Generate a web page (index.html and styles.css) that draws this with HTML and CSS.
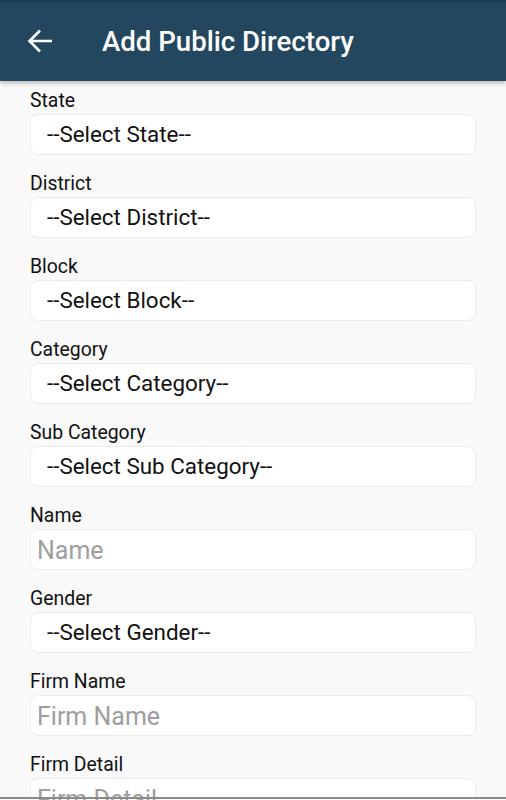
FILE: index.html
```html
<!DOCTYPE html>
<html>
<head>
<meta charset="utf-8">
<link rel="stylesheet" href="styles.css">
</head>
<body>
<div class="app">
  <header class="toolbar">
    <svg class="back" viewBox="0 0 26 26" width="26" height="26"><path d="M25 13H2.5M13 2.5L2.5 13 13 23.5" fill="none" stroke="#fff" stroke-width="2.6" stroke-linecap="butt" stroke-linejoin="miter"/></svg>
    <h1 class="title">Add Public Directory</h1>
  </header>
  <main class="form">
    <div class="field"><div class="label">State</div><div class="box select">--Select State--</div></div>
    <div class="field"><div class="label">District</div><div class="box select">--Select District--</div></div>
    <div class="field"><div class="label">Block</div><div class="box select">--Select Block--</div></div>
    <div class="field"><div class="label">Category</div><div class="box select">--Select Category--</div></div>
    <div class="field"><div class="label">Sub Category</div><div class="box select">--Select Sub Category--</div></div>
    <div class="field"><div class="label">Name</div><div class="box input">Name</div></div>
    <div class="field"><div class="label">Gender</div><div class="box select">--Select Gender--</div></div>
    <div class="field"><div class="label">Firm Name</div><div class="box input">Firm Name</div></div>
    <div class="field"><div class="label">Firm Detail</div><div class="box input">Firm Detail</div></div>
  </main>
  <div class="navline"></div>
</div>
</body>
</html>
```
FILE: styles.css
```css
html, body {
  margin: 0;
  padding: 0;
  height: 800px;
  overflow: hidden;
  background: #f9f9f9;
  font-family: Roboto, "Liberation Sans", sans-serif;
}
.app {
  height: 800px;
  overflow: hidden;
}
.toolbar {
  height: 81px;
  background: #23475f;
  border-top: 2px solid #1d3b50;
  box-sizing: border-box;
  display: flex;
  align-items: center;
  padding-left: 27px;
  box-shadow: 0 2px 5px rgba(0,0,0,0.28);
  position: relative;
  z-index: 1;
}
.back {
  flex: none;
  margin-top: -1px;
}
.title {
  margin: 0 0 0 49px;
  color: #fff;
  font-size: 27.6px;
  font-weight: 500;
}
.form {
  padding: 9px 30px 0 30px;
  display: flex;
  flex-direction: column;
  gap: 18px;
}
.label {
  font-size: 19.4px;
  line-height: 21px;
  color: #111;
  margin-bottom: 3px;
}
.box {
  height: 41px;
  box-sizing: border-box;
  background: #fff;
  border: 1px solid #ebebeb;
  border-radius: 8px;
  font-size: 22.4px;
  line-height: 39px;
  color: #111;
  white-space: nowrap;
}
.select {
  padding-left: 16px;
}
.input {
  padding-left: 6px;
  color: #9e9e9e;
  font-size: 25px;
  line-height: 41px;
}
.navline {
  position: fixed;
  left: 0;
  right: 0;
  bottom: 1px;
  height: 2px;
  background: #8a8a8a;
}
```
